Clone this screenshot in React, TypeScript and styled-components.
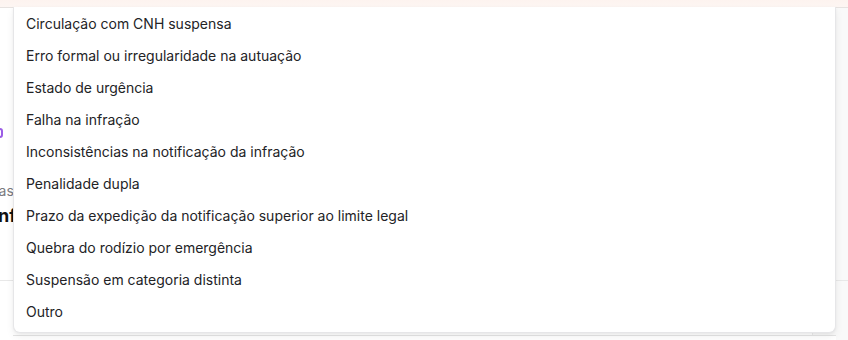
import React from "react";
import styled, { createGlobalStyle } from "styled-components";

const Global = createGlobalStyle`
  html, body { margin: 0; padding: 0; }
  body {
    width: 848px; height: 340px; overflow: hidden;
    background: #fafafa;
    font-family: Inter, "Noto Sans", sans-serif;
    -webkit-font-smoothing: antialiased;
  }
`;

const Page = styled.div`
  position: relative;
  width: 848px;
  height: 340px;
  overflow: hidden;
`;

const TopBar = styled.div`
  height: 7px;
  background: linear-gradient(180deg, #fdf3ef 0%, #fdf6f3 100%);
  border-bottom: 1px solid #e6e2e0;
`;

const Body = styled.div`
  display: flex;
  height: 332px;
`;

const Form = styled.div`
  width: 836px;
  background: #ffffff;
  border-right: 1px solid #ececec;
  display: flex;
  flex-direction: column;
  margin-left: -24px;
  padding-top: 120px;
  white-space: nowrap;
`;

const CheckRow = styled.div`
  display: flex;
  align-items: center;
  gap: 8px;
  height: 10px;
`;

const Check = styled.span`
  width: 14px;
  height: 10px;
  border: 2px solid #9b5de5;
  border-radius: 3px;
  box-sizing: border-box;
  margin-left: 13px;
`;

const Label = styled.div`
  margin-top: 44px;
  font-size: 14px;
  color: #7a7a80;
  line-height: 18px;
`;

const Value = styled.div`
  margin-top: 5px;
  margin-left: 17px;
  font-size: 18px;
  font-weight: 700;
  color: #111;
  line-height: 22px;
`;

const Divider = styled.div`
  margin-top: 53px;
  border-top: 1px solid #e8e8e8;
`;

const Side = styled.div`
  flex: 1;
  background: #f9f9f9;
  display: flex;
  flex-direction: column;
  padding-top: 272px;
`;

const SideLine = styled.div`
  border-top: 1px solid #e8e8e8;
`;

const Menu = styled.ul`
  position: absolute;
  top: 7px;
  left: 13px;
  width: 823px;
  box-sizing: border-box;
  margin: 0;
  padding: 0 0 5px;
  list-style: none;
  background: #fff;
  border: 1px solid #e6e6e8;
  border-top: none;
  border-radius: 0 0 7px 7px;
  box-shadow: 0 4px 8px rgba(0, 0, 0, 0.06), 0 1px 3px rgba(0, 0, 0, 0.05);
`;

const Item = styled.li`
  height: 32px;
  display: flex;
  align-items: center;
  padding: 0 12px;
  font-size: 14px;
  color: #232326;
  white-space: nowrap;
`;

const NextField = styled.div`
  position: absolute;
  left: 13px;
  top: 335px;
  width: 823px;
  height: 10px;
  border-top: 1px solid #e4e4e4;
  background: #fff;
`;

const options = [
  "Circulação com CNH suspensa",
  "Erro formal ou irregularidade na autuação",
  "Estado de urgência",
  "Falha na infração",
  "Inconsistências na notificação da infração",
  "Penalidade dupla",
  "Prazo da expedição da notificação superior ao limite legal",
  "Quebra do rodízio por emergência",
  "Suspensão em categoria distinta",
  "Outro",
];

export default function App() {
  return (
    <>
      <Global />
      <Page>
        <TopBar />
        <Body>
          <Form>
            <CheckRow>
              <Check />
            </CheckRow>
            <Label>Datas e horários</Label>
            <Value>Infração de trânsito</Value>
            <Divider />
          </Form>
          <Side>
            <SideLine />
          </Side>
        </Body>
        <NextField />
        <Menu>
          {options.map((o) => (
            <Item key={o}>{o}</Item>
          ))}
        </Menu>
      </Page>
    </>
  );
}
